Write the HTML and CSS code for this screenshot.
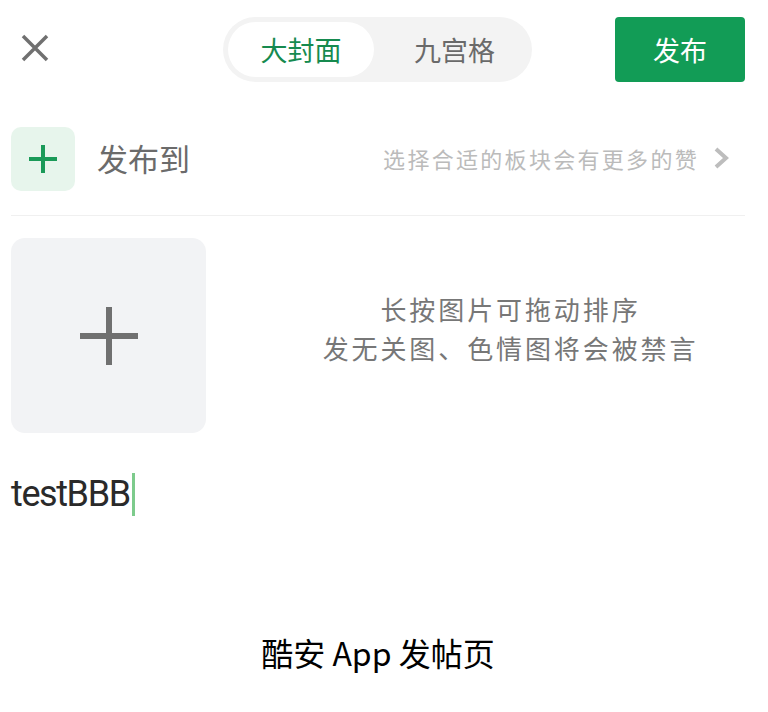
FILE: index.html
```html
<!DOCTYPE html>
<html lang="zh-CN">
<head>
  <meta charset="UTF-8" />
  <meta name="viewport" content="width=device-width,initial-scale=1.0" />
  <title>酷安 App 发帖页</title>
  <link rel="stylesheet" href="styles.css">
</head>
<body>
  <div class="phone">
    <header class="topbar">
      <span class="close-btn">
        <svg width="28" height="28" viewBox="0 0 28 28"><path d="M2 2 L26 26 M26 2 L2 26" stroke="#707070" stroke-width="3.5" fill="none"/></svg>
      </span>
      <div class="switch">
        <span class="switch-item active">大封面</span>
        <span class="switch-item">九宫格</span>
      </div>
      <button class="publish-btn">发布</button>
    </header>

    <div class="target-row">
      <span class="target-add">
        <svg width="30" height="30" viewBox="0 0 30 30"><path d="M15 1 V29 M1 15 H29" stroke="#1a9a58" stroke-width="4" fill="none"/></svg>
      </span>
      <span class="target-label">发布到</span>
      <span class="target-hint">选择合适的板块会有更多的赞</span>
      <svg class="chevron" width="16" height="22" viewBox="0 0 16 22"><path d="M3 2 L13 11 L3 20" stroke="#bdbdbd" stroke-width="4" fill="none"/></svg>
    </div>

    <div class="media-row">
      <div class="media-add">
        <svg width="60" height="60" viewBox="0 0 60 60"><path d="M30 1 V59 M1 30 H59" stroke="#707070" stroke-width="6" fill="none"/></svg>
      </div>
      <div class="media-tip">
        <div>长按图片可拖动排序</div>
        <div>发无关图、色情图将会被禁言</div>
      </div>
    </div>

    <div class="editor"><span class="editor-text">testBBB</span><span class="caret"></span></div>
  </div>

  <p class="caption">酷安 App 发帖页</p>
</body>
</html>
```

FILE: styles.css
```css
body {
  margin: 0;
  background: #fff;
  font-family: "Noto Sans CJK SC", "Noto Sans", sans-serif;
}

.phone {
  padding: 0 23px 0 11px;
}

.topbar {
  display: flex;
  align-items: center;
  height: 98px;
}

.close-btn {
  display: flex;
  margin-left: 10px;
  margin-top: -2px;
}

.switch {
  display: flex;
  align-items: center;
  margin-left: 174px;
  background: #f3f3f3;
  border-radius: 33px;
  height: 65px;
  padding: 0 5px;
  width: 309px;
  box-sizing: border-box;
}

.switch-item {
  height: 55px;
  line-height: 55px;
  text-align: center;
  font-size: 27px;
  color: #6a6a6a;
  border-radius: 28px;
  flex: 1;
  padding-left: 8px;
}

.switch-item.active {
  flex: 0 0 146px;
  padding-left: 0;
  background: #fff;
  color: #168a4f;
}

.publish-btn {
  margin-left: auto;
  width: 130px;
  height: 65px;
  border: none;
  border-radius: 4px;
  background: #129c56;
  color: #fff;
  font-family: inherit;
  font-size: 27px;
}

.target-row {
  display: flex;
  align-items: center;
  height: 118px;
  border-bottom: 1px solid #f0f0f0;
  box-sizing: border-box;
  padding-top: 6px;
}

.target-add {
  display: flex;
  align-items: center;
  justify-content: center;
  width: 64px;
  height: 64px;
  border-radius: 10px;
  background: #e7f5ec;
  margin-top: -2px;
}

.target-label {
  margin-left: 22px;
  font-size: 31px;
  color: #6b6b6b;
  margin-top: -4px;
}

.target-hint {
  margin-left: auto;
  font-size: 22px;
  letter-spacing: 2.3px;
  color: #bbbbbb;
  margin-top: -4px;
}

.chevron {
  margin-left: 14px;
  margin-right: 16px;
  margin-top: -4px;
}

.media-row {
  display: flex;
  align-items: center;
  margin-top: 22px;
}

.media-add {
  display: flex;
  align-items: center;
  justify-content: center;
  width: 195px;
  height: 195px;
  border-radius: 14px;
  background: #f2f3f5;
}

.media-tip {
  flex: 1;
  text-align: center;
  font-size: 26px;
  letter-spacing: 2.9px;
  line-height: 39px;
  color: #777;
  margin-top: -16px;
  padding-left: 70px;
}

.editor {
  display: flex;
  align-items: center;
  margin-top: 39px;
  height: 44px;
}

.editor-text {
  font-family: Roboto, "Noto Sans", sans-serif;
  font-size: 36px;
  letter-spacing: -1.4px;
  color: #2a2a2a;
}

.caret {
  width: 3px;
  height: 43px;
  background: #7dcb8c;
  margin-left: 2px;
}

.caption {
  margin: 113px 0 0;
  padding-right: 12px;
  text-align: center;
  font-size: 32px;
  color: #000;
}
```
